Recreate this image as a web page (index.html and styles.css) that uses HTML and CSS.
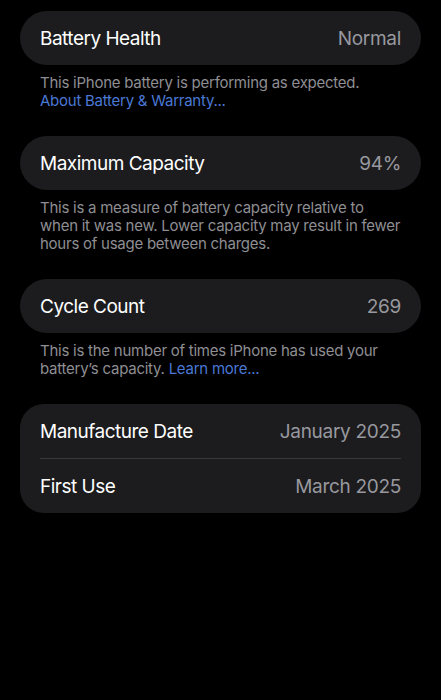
FILE: index.html
```html
<!DOCTYPE html>
<html lang="en">
<head>
<meta charset="utf-8">
<title>Battery Health</title>
<link rel="stylesheet" href="styles.css">
</head>
<body>
<main class="page">
  <section class="group">
    <div class="card pill">
      <div class="row"><span class="label">Battery Health</span><span class="value">Normal</span></div>
    </div>
    <p class="footer">This iPhone battery is performing as expected.<br><a class="link" href="#">About Battery &amp; Warranty...</a></p>
  </section>
  <section class="group">
    <div class="card pill">
      <div class="row"><span class="label">Maximum Capacity</span><span class="value">94%</span></div>
    </div>
    <p class="footer">This is a measure of battery capacity relative to<br>when it was new. Lower capacity may result in fewer<br>hours of usage between charges.</p>
  </section>
  <section class="group">
    <div class="card pill">
      <div class="row"><span class="label">Cycle Count</span><span class="value">269</span></div>
    </div>
    <p class="footer">This is the number of times iPhone has used your<br>battery’s capacity. <a class="link" href="#">Learn more...</a></p>
  </section>
  <section class="group">
    <div class="card">
      <div class="row"><span class="label">Manufacture Date</span><span class="value">January 2025</span></div>
      <div class="sep"></div>
      <div class="row"><span class="label">First Use</span><span class="value">March 2025</span></div>
    </div>
  </section>
</main>
</body>
</html>
```
FILE: styles.css
```css
html, body {
  margin: 0;
  padding: 0;
  background: #000;
}
body {
  font-family: Inter, "Noto Sans", "Liberation Sans", sans-serif;
  color: #fff;
  -webkit-font-smoothing: antialiased;
}
.page {
  display: flex;
  flex-direction: column;
  gap: 26px;
  padding: 11px 20px;
}
.group {
  display: flex;
  flex-direction: column;
}
.card {
  background: #1c1c1e;
  border-radius: 24px;
  display: flex;
  flex-direction: column;
}
.card.pill {
  border-radius: 27px;
}
.row {
  height: 54px;
  display: flex;
  align-items: center;
  justify-content: space-between;
  padding: 0 20px;
}
.label {
  font-size: 19px;
  letter-spacing: -0.5px;
  color: #fff;
  padding-top: 1px;
}
.value {
  font-size: 19px;
  letter-spacing: -0.3px;
  color: #98989e;
  padding-top: 1px;
}
.sep {
  height: 1px;
  background: #38383a;
  margin: 0 20px;
}
.footer {
  margin: 0;
  padding: 9px 20px 0;
  font-size: 15px;
  line-height: 18px;
  color: #8e8e93;
  letter-spacing: -0.25px;
  white-space: nowrap;
}
.link {
  color: #4a78d6;
  text-decoration: none;
}
```
